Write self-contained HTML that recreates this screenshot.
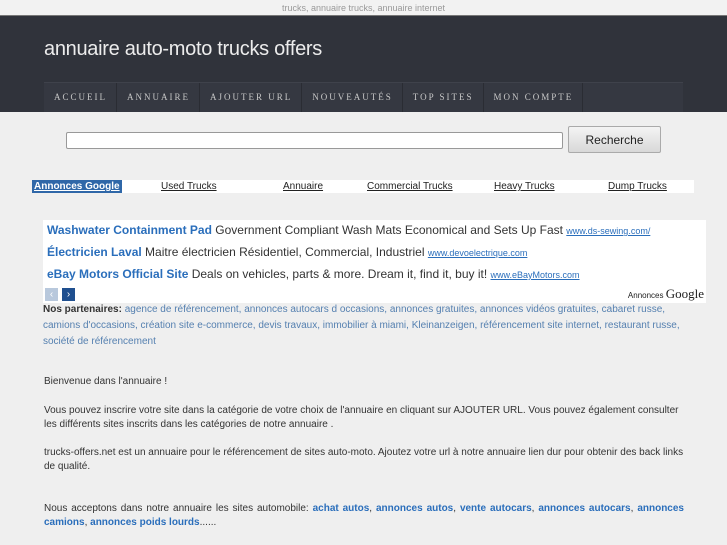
<!DOCTYPE html>
<html><head><meta charset="utf-8"><style>
*{margin:0;padding:0;box-sizing:border-box}
body{width:727px;height:545px;overflow:hidden;background:#efefef;font-family:"Liberation Sans",sans-serif;color:#333;position:relative}
.a{position:absolute}
#top{top:0;left:0;width:727px;height:16px;text-align:center;font-size:9px;color:#999;line-height:16px;background:#f2f2f2;border-bottom:1px solid #777}
#hd{top:16px;left:0;width:727px;height:96px;background:#30333b}
#title{left:44px;top:38px;font-size:20px;color:#ececec;letter-spacing:-0.3px}
#nav{left:44px;top:82px;width:639px;height:30px;background:#353841;border-top:1px solid #3f424b}
#nav span{float:left;height:29px;line-height:29px;padding:0 9px 0 10px;font-family:"Liberation Serif",serif;font-size:9px;letter-spacing:2px;color:#c8c8c8;border-right:1px solid #2a2c33}
#in{left:66px;top:132px;width:497px;height:17px;background:#fff;border:1px solid #999;border-radius:2px}
#btn{left:568px;top:126px;width:93px;height:27px;border:1px solid #aaa;border-radius:2px;background:linear-gradient(#f4f4f4,#d8d8d8);font-size:12px;text-align:center;line-height:26px;color:#222}
#ab{left:32px;top:180px;width:662px;height:13px;background:#fff;font-size:10px}
#ab span{position:absolute;top:0;line-height:13px;text-decoration:underline;color:#222}
#ads{left:43px;top:220px;width:663px;height:83px;background:#fff;font-size:12px}
#ads p{position:absolute;left:4px;white-space:nowrap}
#ads b{color:#2a6ebb}
#ads small{font-size:9px;color:#2a6ebb;text-decoration:underline}
.pt{left:43px;font-size:10px;color:#5580b0;line-height:16px}
.t{left:44px;font-size:10px;color:#333;line-height:14px;width:640px}
.t b{color:#2a6ebb}
</style></head><body>
<div id="top" class="a">trucks, annuaire trucks, annuaire internet</div>
<div id="hd" class="a"></div>
<div id="title" class="a">annuaire auto-moto trucks offers</div>
<div id="nav" class="a"><span>ACCUEIL</span><span>ANNUAIRE</span><span>AJOUTER URL</span><span>NOUVEAUTÉS</span><span>TOP SITES</span><span>MON COMPTE</span></div>
<div id="in" class="a"></div>
<div id="btn" class="a">Recherche</div>
<div id="ab" class="a"><span style="left:0;background:#2f67a8;color:#fff;padding:0 2px;font-weight:bold">Annonces Google</span><span style="left:129px">Used Trucks</span><span style="left:251px">Annuaire</span><span style="left:335px">Commercial Trucks</span><span style="left:462px">Heavy Trucks</span><span style="left:576px">Dump Trucks</span></div>
<div id="ads" class="a">
<p style="top:3px"><b>Washwater Containment Pad</b> Government Compliant Wash Mats Economical and Sets Up Fast <small>www.ds-sewing.com/</small></p>
<p style="top:25px"><b>Électricien Laval</b> Maitre électricien Résidentiel, Commercial, Industriel <small>www.devoelectrique.com</small></p>
<p style="top:47px"><b>eBay Motors Official Site</b> Deals on vehicles, parts &amp; more. Dream it, find it, buy it! <small>www.eBayMotors.com</small></p>
<div class="a" style="left:2px;top:68px;width:13px;height:13px;background:#b8c8dc;color:#fff;font-size:10px;text-align:center;line-height:13px">‹</div>
<div class="a" style="left:19px;top:68px;width:13px;height:13px;background:#1f4f8f;color:#fff;font-size:10px;text-align:center;line-height:13px">›</div>
<div class="a" style="right:2px;top:66px;font-size:8px;color:#222">Annonces <span style="font-family:'Liberation Serif',serif;font-size:13px">Google</span></div>
</div>
<div class="a pt" style="top:302px;width:650px"><b style="color:#333">Nos partenaires:</b> agence de référencement, annonces autocars d occasions, annonces gratuites, annonces vidéos gratuites, cabaret russe, camions d'occasions, création site e-commerce, devis travaux, immobilier à miami, Kleinanzeigen, référencement site internet, restaurant russe, société de référencement</div>
<div class="a t" style="top:375px">Bienvenue dans l'annuaire !</div>
<div class="a t" style="top:404px">Vous pouvez inscrire votre site dans la catégorie de votre choix de l'annuaire en cliquant sur AJOUTER URL. Vous pouvez également consulter les différents sites inscrits dans les catégories de notre annuaire .</div>
<div class="a t" style="top:446px">trucks-offers.net est un annuaire pour le référencement de sites auto-moto. Ajoutez votre url à notre annuaire lien dur pour obtenir des back links de qualité.</div>
<div class="a t" style="top:502px;text-align:justify">Nous acceptons dans notre annuaire les sites automobile: <b>achat autos</b>, <b>annonces autos</b>, <b>vente autocars</b>, <b>annonces autocars</b>, <b>annonces camions</b>, <b>annonces poids lourds</b>......</div>
</body></html>
